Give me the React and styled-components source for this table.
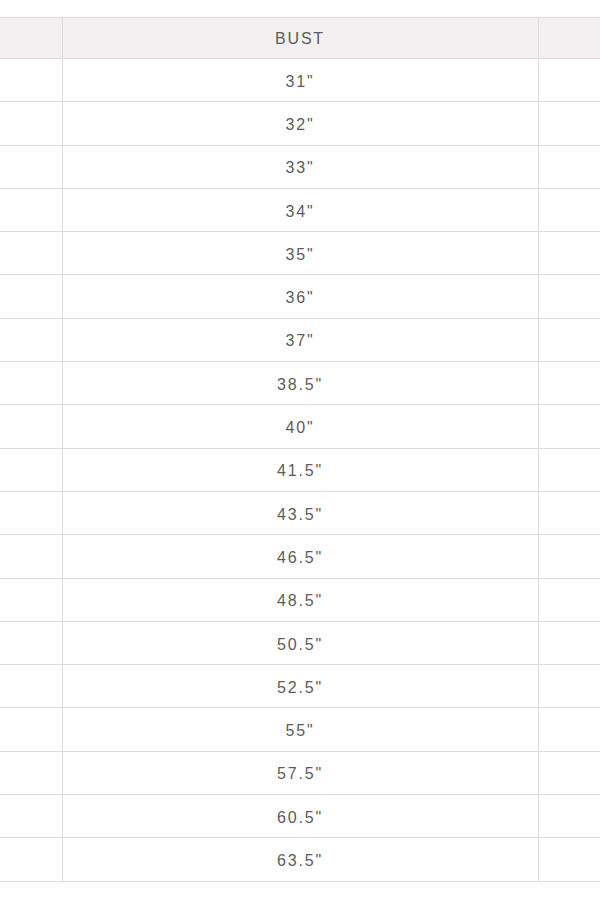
import React from "react";
import styled, { createGlobalStyle } from "styled-components";

const Global = createGlobalStyle`
  html, body { margin: 0; padding: 0; background: #fff; }
  body { font-family: "Liberation Sans", Arial, sans-serif; overflow: hidden; }
`;

const Page = styled.div`
  width: 600px;
  padding-top: 17px;
  overflow: hidden;
`;

const Table = styled.table`
  width: 600px;
  border-collapse: collapse;
  table-layout: fixed;
  color: #5c5c5c;
  font-size: 16px;
  letter-spacing: 1.8px;
`;

const HeadCell = styled.th`
  background: #f4f0f1;
  font-weight: normal;
  height: 41px;
  box-sizing: border-box;
  border: 1px solid #dcdcdc;
  border-left: ${(p) => (p.$edge === "left" ? "none" : "1px solid #dcdcdc")};
  border-right: ${(p) => (p.$edge === "right" ? "none" : "1px solid #dcdcdc")};
  text-align: center;
  padding: 2px 0 0;
`;

const Cell = styled.td`
  height: 43.3px;
  box-sizing: border-box;
  border: 1px solid #dcdcdc;
  border-left: ${(p) => (p.$edge === "left" ? "none" : "1px solid #dcdcdc")};
  border-right: ${(p) => (p.$edge === "right" ? "none" : "1px solid #dcdcdc")};
  text-align: center;
  padding: 3px 0 0;
`;

const sizes = [
  "31", "32", "33", "34", "35", "36", "37", "38.5", "40", "41.5",
  "43.5", "46.5", "48.5", "50.5", "52.5", "55", "57.5", "60.5", "63.5",
];

export default function App() {
  return (
    <>
      <Global />
      <Page>
        <Table>
          <colgroup>
            <col style={{ width: 62 }} />
            <col style={{ width: 476 }} />
            <col style={{ width: 62 }} />
          </colgroup>
          <thead>
            <tr>
              <HeadCell $edge="left"></HeadCell>
              <HeadCell>BUST</HeadCell>
              <HeadCell $edge="right"></HeadCell>
            </tr>
          </thead>
          <tbody>
            {sizes.map((s) => (
              <tr key={s}>
                <Cell $edge="left"></Cell>
                <Cell>{s}"</Cell>
                <Cell $edge="right"></Cell>
              </tr>
            ))}
          </tbody>
        </Table>
      </Page>
    </>
  );
}
